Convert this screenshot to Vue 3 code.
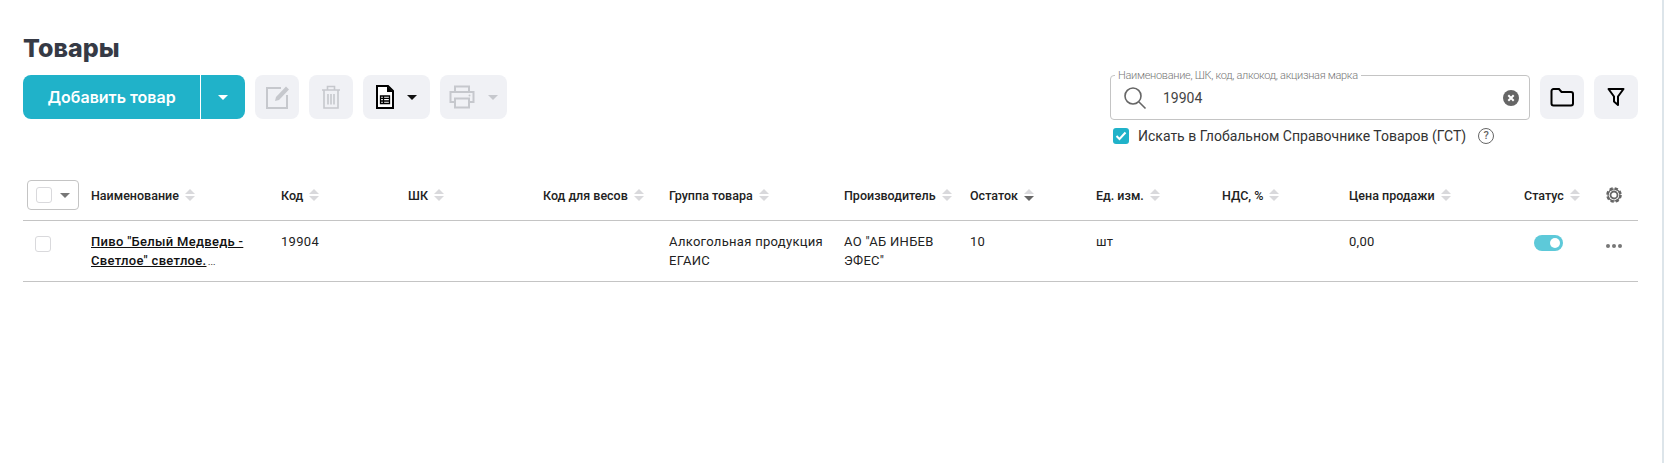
<script setup>
const columns = [
  { label: "Наименование", sort: "" },
  { label: "Код", sort: "" },
  { label: "ШК", sort: "" },
  { label: "Код для весов", sort: "" },
  { label: "Группа товара", sort: "" },
  { label: "Производитель", sort: "" },
  { label: "Остаток", sort: "desc" },
  { label: "Ед. изм.", sort: "" },
  { label: "НДС, %", sort: "" },
  { label: "Цена продажи", sort: "" },
  { label: "Статус", sort: "" },
];
</script>

<template>
  <div class="page">
    <h1 class="title">Товары</h1>

    <div class="toolbar">
      <div class="actions">
        <div class="add-btn">
          <span class="add-label">Добавить товар</span>
          <span class="add-arrow"><i class="caret caret-white"></i></span>
        </div>
        <div class="tool tool-square">
          <svg width="26" height="26" viewBox="0 0 26 26" fill="none" stroke="#c6c8cd" stroke-width="2">
            <path d="M17 4H3v20h20V11" />
            <path d="M11 17l1-4L22 2.500l3 3L15 16z" fill="#c6c8cd" stroke="none" />
          </svg>
        </div>
        <div class="tool tool-square">
          <svg width="20" height="24" viewBox="0 0 20 24" fill="none" stroke="#c6c8cd" stroke-width="1.600">
            <path d="M1 5h18M6.500 5V1.500h7V5M3 5v18h14V5M7 9v10.500M10 9v10.500M13 9v10.500" />
          </svg>
        </div>
        <div class="tool tool-wide">
          <svg width="18" height="24" viewBox="0 0 18 24">
            <path d="M2 1h10l5 5v17H1V1z" fill="#fff" stroke="#000" stroke-width="2" />
            <path d="M11 1v6h6z" fill="#000" />
            <path d="M4.500 11h9v7.500h-9z M4.500 13.300h9M4.500 16h9M7.500 11v7.500" fill="none" stroke="#000" stroke-width="1.300" />
          </svg>
          <i class="caret caret-black"></i>
        </div>
        <div class="tool tool-wide">
          <svg width="26" height="24" viewBox="0 0 26 24" fill="none" stroke="#c6c8cd" stroke-width="2">
            <path d="M6 7V1.500h14V7M6 17H1.500V7h23v10H20" />
            <path d="M6 13.500h14v9H6z" />
            <circle cx="20.500" cy="10.500" r="1" fill="#c6c8cd" stroke="none" />
          </svg>
          <i class="caret caret-grey"></i>
        </div>
      </div>

      <div class="search-area">
        <div class="search-top">
          <div class="search-box">
            <span class="search-legend">Наименование, ШК, код, алкокод, акцизная марка</span>
            <svg class="search-icon" width="24" height="24" viewBox="0 0 24 24" fill="none" stroke="#666" stroke-width="1.600">
              <circle cx="10" cy="10" r="8" />
              <path d="M16 16l6.500 6.500" />
            </svg>
            <span class="search-value">19904</span>
            <svg class="search-clear" width="16" height="16" viewBox="0 0 16 16">
              <circle cx="8" cy="8" r="8" fill="#666" />
              <path d="M5.300 5.300l5.400 5.400M10.700 5.300l-5.400 5.400" stroke="#fff" stroke-width="2" />
            </svg>
          </div>
          <div class="tool tool-search">
            <svg width="24" height="20" viewBox="0 0 24 20" fill="none" stroke="#000" stroke-width="2">
              <path d="M1.500 4a2 2 0 0 1 2-2h5.500l2.500 3h9.500a2 2 0 0 1 2 2v9.500a2 2 0 0 1-2 2h-17.500a2 2 0 0 1-2-2z" />
            </svg>
          </div>
          <div class="tool tool-search">
            <svg width="18" height="20" viewBox="0 0 18 20" fill="none" stroke="#000" stroke-width="2" stroke-linejoin="round">
              <path d="M1.500 2h15L11 9.500V18l-4-3.500V9.500z" />
            </svg>
          </div>
        </div>
        <div class="gst-row">
          <span class="gst-check">
            <svg width="12" height="10" viewBox="0 0 12 10" fill="none" stroke="#fff" stroke-width="2">
              <path d="M1.500 5l3 3L10.500 1.500" />
            </svg>
          </span>
          <span class="gst-label">Искать в Глобальном Справочнике Товаров (ГСТ)</span>
          <span class="gst-help">?</span>
        </div>
      </div>
    </div>

    <div class="table">
      <div class="row head">
        <div class="cell-check">
          <div class="check-menu">
            <span class="box"></span>
            <i class="caret caret-dim"></i>
          </div>
        </div>
        <div v-for="col in columns" :key="col.label" class="head-cell">
          <span>{{ col.label }}</span>
          <span class="sort">
            <i class="sort-up"></i>
            <i class="sort-down" :class="{ active: col.sort === 'desc' }"></i>
          </span>
        </div>
        <div class="head-cell">
          <svg width="18" height="18" viewBox="0 0 18 18" fill="none" stroke="#666">
            <circle cx="9" cy="9" r="3.500" stroke-width="1.800" />
            <circle cx="9" cy="9" r="6.500" stroke-width="2.600" stroke-dasharray="3.100 2" />
            <circle cx="9" cy="9" r="6" stroke-width="1.200" />
          </svg>
        </div>
      </div>

      <div class="row body">
        <div class="cell-check"><span class="box"></span></div>
        <div class="cell"><a class="name">Пиво "Белый Медведь - Светлое" светлое.</a><span class="more">…</span></div>
        <div class="cell">19904</div>
        <div class="cell"></div>
        <div class="cell"></div>
        <div class="cell">Алкогольная продукция ЕГАИС</div>
        <div class="cell">АО "АБ ИНБЕВ ЭФЕС"</div>
        <div class="cell">10</div>
        <div class="cell">шт</div>
        <div class="cell"></div>
        <div class="cell">0,00</div>
        <div class="cell"><span class="toggle"><i></i></span></div>
        <div class="cell dots"><i></i><i></i><i></i></div>
      </div>
    </div>
  </div>
</template>

<style>
html,
body {
  background: #fff;
}
</style>

<style scoped>
.page {
  box-sizing: border-box;
  min-height: 463px;
  padding: 32px 24px 0 23px;
  border-right: 2px solid #dde5ea;
  font-family: Roboto, "Liberation Sans", sans-serif;
  color: #222;
}

.title {
  margin: 0;
  font-family: Inter, "Liberation Sans", sans-serif;
  font-size: 25px;
  line-height: 32px;
  font-weight: 800;
  color: #363a45;
}

.toolbar {
  display: flex;
  justify-content: space-between;
  align-items: flex-start;
  margin-top: 11px;
}

.actions {
  display: flex;
  gap: 10px;
}

.add-btn {
  display: flex;
  width: 222px;
  height: 44px;
  border-radius: 8px;
  background: #20b2c9;
  color: #fff;
}

.add-label {
  width: 177px;
  border-right: 1px solid #fff;
  font-family: Inter, "Liberation Sans", sans-serif;
  font-size: 16px;
  font-weight: 600;
  line-height: 44px;
  text-align: center;
}

.add-arrow {
  flex: 1;
  display: flex;
  align-items: center;
  justify-content: center;
}

.caret {
  display: block;
  width: 0;
  height: 0;
  border-left: 5px solid transparent;
  border-right: 5px solid transparent;
  border-top: 5px solid #000;
}

.caret-white {
  border-top-color: #fff;
}

.caret-black {
  border-top-color: #111;
}

.caret-grey {
  border-top-color: #c6c8cd;
}

.caret-dim {
  border-top-color: #777;
}

.tool {
  display: flex;
  align-items: center;
  justify-content: center;
  height: 44px;
  border-radius: 8px;
  background: #f0f1f5;
}

.tool-square {
  width: 44px;
}

.tool-wide {
  width: 67px;
  gap: 13px;
}

.tool-search {
  width: 44px;
}

.search-top {
  display: flex;
  gap: 10px;
}

.search-box {
  position: relative;
  display: flex;
  align-items: center;
  width: 420px;
  height: 45px;
  padding: 0 10px 0 12px;
  box-sizing: border-box;
  border: 1px solid #c4c4c4;
  border-radius: 4px;
}

.search-legend {
  position: absolute;
  top: -7px;
  left: 4px;
  padding: 0 3px;
  background: #fff;
  font-size: 11px;
  font-weight: 300;
  line-height: 13px;
  letter-spacing: -0.3px;
  color: #777;
}

.search-value {
  flex: 1;
  margin-left: 16px;
  font-size: 14px;
  color: #444;
}

.gst-row {
  display: flex;
  align-items: center;
  margin: 7px 0 0 3px;
}

.gst-check {
  display: flex;
  align-items: center;
  justify-content: center;
  width: 16px;
  height: 16px;
  border-radius: 3px;
  background: #20b2c9;
}

.gst-label {
  margin-left: 9px;
  font-size: 14px;
  line-height: 18px;
  color: #333;
}

.gst-help {
  box-sizing: border-box;
  width: 16px;
  height: 16px;
  margin-left: 12px;
  border: 1.500px solid #666;
  border-radius: 50%;
  font-size: 11px;
  font-weight: 500;
  line-height: 13px;
  text-align: center;
  color: #666;
}

.table {
  margin-top: 25px;
}

.row {
  display: grid;
  grid-template-columns: 68px 190px 127px 135px 126px 175px 126px 126px 126px 127px 175px 81px 33px;
  border-bottom: 1.500px solid #c4c4c4;
}

.head {
  height: 50px;
  align-items: center;
}

.body {
  height: 60px;
  font-size: 13px;
  line-height: 19px;
  letter-spacing: 0.3px;
}

.cell-check {
  padding-left: 12px;
}

.head .cell-check {
  padding-left: 4px;
}

.check-menu {
  display: flex;
  align-items: center;
  justify-content: space-between;
  box-sizing: border-box;
  width: 52px;
  height: 30px;
  padding: 0 8px;
  border: 1px solid #c4c4c4;
  border-radius: 4px;
}

.box {
  display: block;
  box-sizing: border-box;
  width: 16px;
  height: 16px;
  border: 1.500px solid #d9d9dc;
  border-radius: 3px;
}

.head-cell {
  display: flex;
  align-items: center;
  gap: 6px;
  font-size: 12.500px;
  font-weight: 500;
  white-space: nowrap;
}

.sort {
  display: flex;
  flex-direction: column;
  gap: 2px;
}

.sort i {
  display: block;
  width: 0;
  height: 0;
  border-left: 5px solid transparent;
  border-right: 5px solid transparent;
}

.sort-up {
  border-bottom: 5px solid #d9d9dc;
}

.sort-down {
  border-top: 5px solid #d9d9dc;
}

.sort-down.active {
  border-top-color: #666;
}

.cell {
  padding: 11px 14px 0 0;
}

.body .cell-check {
  padding-top: 15px;
}

.name {
  font-weight: 500;
  text-decoration: underline;
  color: #111;
}

.more {
  margin-left: 1px;
  font-weight: 300;
}

.toggle {
  display: block;
  position: relative;
  width: 29px;
  height: 16px;
  margin: 3px 0 0 10px;
  border-radius: 8px;
  background: #5dc9d9;
}

.toggle i {
  position: absolute;
  top: 3px;
  right: 3px;
  width: 10px;
  height: 10px;
  border-radius: 50%;
  background: #fff;
}

.dots {
  display: flex;
  gap: 2px;
  padding: 23px 0 0 1px;
}

.dots i {
  width: 4px;
  height: 4px;
  border-radius: 50%;
  background: #777;
}
</style>
